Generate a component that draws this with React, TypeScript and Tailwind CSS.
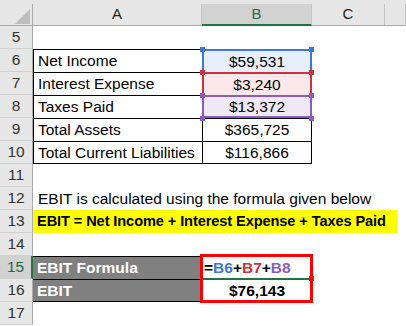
import React from 'react';

const HDR = 'bg-[#e6e6e6]';

const ColHead = ({ label, active }: { label: string; active?: boolean }) => (
  <div className={`relative ${HDR} pt-[4px] ${active ? '' : 'border-b border-[#ababab]'}`}>
    <div
      className={`h-full flex items-center justify-center border-r border-[#c6c6c6] text-[15px] ${
        active ? 'bg-[#d2d2d2] text-[#1e6b45] border-b-2 border-b-[#217346]' : 'text-[#222]'
      }`}
    >
      {label}
    </div>
  </div>
);

const RowHead = ({ n, active }: { n: number; active?: boolean }) => (
  <div
    className={`flex items-center justify-center border-b border-[#d0d0d0] text-[15.5px] ${
      active
        ? 'bg-[#d2d2d2] text-[#1e6b45] border-r-2 border-r-[#217346]'
        : `${HDR} text-[#333] border-r border-r-[#ababab]`
    }`}
  >
    {n}
  </div>
);

export default function App() {
  const tableA = 'border-t border-l border-black pl-[4px] flex items-center whitespace-nowrap';
  const blackB = 'border-t border-r border-l border-black flex items-center justify-center';

  return (
    <div className="relative w-[406px] h-[326px] overflow-hidden bg-white font-['Liberation_Sans',Arial,sans-serif] text-[15.5px] text-black">
      <div className="grid grid-cols-[33px_169px_110px_73px_21px] grid-rows-[26px_repeat(13,23px)]">
        {/* column headers */}
        <div className={`relative ${HDR} border-b border-[#ababab] pt-[4px]`}>
          <div className="h-full border-r border-[#ababab]" />
          <svg className="absolute left-[15px] top-[9px]" width="16" height="16" viewBox="0 0 16 16">
            <polygon points="15,0 15,15 0,15" fill="#bdbdbd" />
          </svg>
        </div>
        <ColHead label="A" />
        <ColHead label="B" active />
        <ColHead label="C" />
        <ColHead label="" />

        {/* 5 */}
        <RowHead n={5} />
        <div className="col-span-4" />

        {/* 6 */}
        <RowHead n={6} />
        <div className={tableA}>Net Income</div>
        <div className="border-2 border-b-0 border-[#3c78d8] bg-[#e6eef9] flex items-center justify-center">$59,531</div>
        <div className="col-span-2" />

        {/* 7 */}
        <RowHead n={7} />
        <div className={tableA}>Interest Expense</div>
        <div className="border-2 border-b-0 border-[#cc3340] bg-[#fbe8ea] flex items-center justify-center">$3,240</div>
        <div className="col-span-2" />

        {/* 8 */}
        <RowHead n={8} />
        <div className={tableA}>Taxes Paid</div>
        <div className="border-2 border-[#8a5cc2] bg-[#efe9f6] flex items-center justify-center">$13,372</div>
        <div className="col-span-2" />

        {/* 9 */}
        <RowHead n={9} />
        <div className={tableA}>Total Assets</div>
        <div className={blackB}>$365,725</div>
        <div className="col-span-2" />

        {/* 10 */}
        <RowHead n={10} />
        <div className={`${tableA} border-b`}>Total Current Liabilities</div>
        <div className={`${blackB} border-b`}>$116,866</div>
        <div className="col-span-2" />

        {/* 11 */}
        <RowHead n={11} />
        <div className="col-span-4" />

        {/* 12 */}
        <RowHead n={12} />
        <div className="col-span-4 pl-[5px] flex items-center whitespace-nowrap">
          EBIT is calculated using the formula given below
        </div>

        {/* 13 */}
        <RowHead n={13} />
        <div className="col-span-4 flex">
          <div className="w-[364px] bg-[#ffff00] pl-[4px] flex items-center whitespace-nowrap font-bold text-[14.6px] tracking-[-0.1px]">
            EBIT = Net Income + Interest Expense + Taxes Paid
          </div>
        </div>

        {/* 14 */}
        <RowHead n={14} />
        <div className="col-span-4" />

        {/* 15 */}
        <RowHead n={15} active />
        <div className="bg-[#808080] border-t border-black pl-[4px] flex items-center text-white font-bold">EBIT Formula</div>
        <div className="border-t border-black pl-[2px] flex items-center font-bold">
          <span>=</span>
          <span className="text-[#3c78d8]">B6</span>
          <span>+</span>
          <span className="text-[#cc3340]">B7</span>
          <span>+</span>
          <span className="text-[#8a5cc2]">B8</span>
        </div>
        <div className="col-span-2" />

        {/* 16 */}
        <RowHead n={16} />
        <div className="bg-[#808080] border-t border-b border-black pl-[4px] flex items-center text-white font-bold">EBIT</div>
        <div className="border-t border-b border-black flex items-center justify-center font-bold">$76,143</div>
        <div className="col-span-2" />

        {/* 17 */}
        <RowHead n={17} />
        <div className="col-span-4" />
      </div>

      {/* range handles */}
      <div className="absolute left-[200px] top-[47px] w-[5px] h-[5px] bg-[#3c78d8]" />
      <div className="absolute left-[309px] top-[47px] w-[5px] h-[5px] bg-[#3c78d8]" />
      <div className="absolute left-[200px] top-[70px] w-[5px] h-[5px] bg-[#cc3340]" />
      <div className="absolute left-[309px] top-[70px] w-[5px] h-[5px] bg-[#cc3340]" />
      <div className="absolute left-[200px] top-[93px] w-[5px] h-[5px] bg-[#8a5cc2]" />
      <div className="absolute left-[309px] top-[93px] w-[5px] h-[5px] bg-[#8a5cc2]" />
      <div className="absolute left-[200px] top-[116px] w-[5px] h-[5px] bg-[#8a5cc2]" />
      <div className="absolute left-[309px] top-[116px] w-[5px] h-[5px] bg-[#8a5cc2]" />

      {/* selected cell bottom + fill handle */}
      <div className="absolute left-[203px] top-[278px] w-[108px] h-[2px] bg-[#217346]" />
      <div className="absolute left-[309px] top-[276px] w-[5px] h-[5px] bg-[#217346]" />

      {/* red highlight box */}
      <div className="absolute left-[200px] top-[254px] w-[113px] h-[49px] border-[3px] border-[#ff0000]" />
    </div>
  );
}
